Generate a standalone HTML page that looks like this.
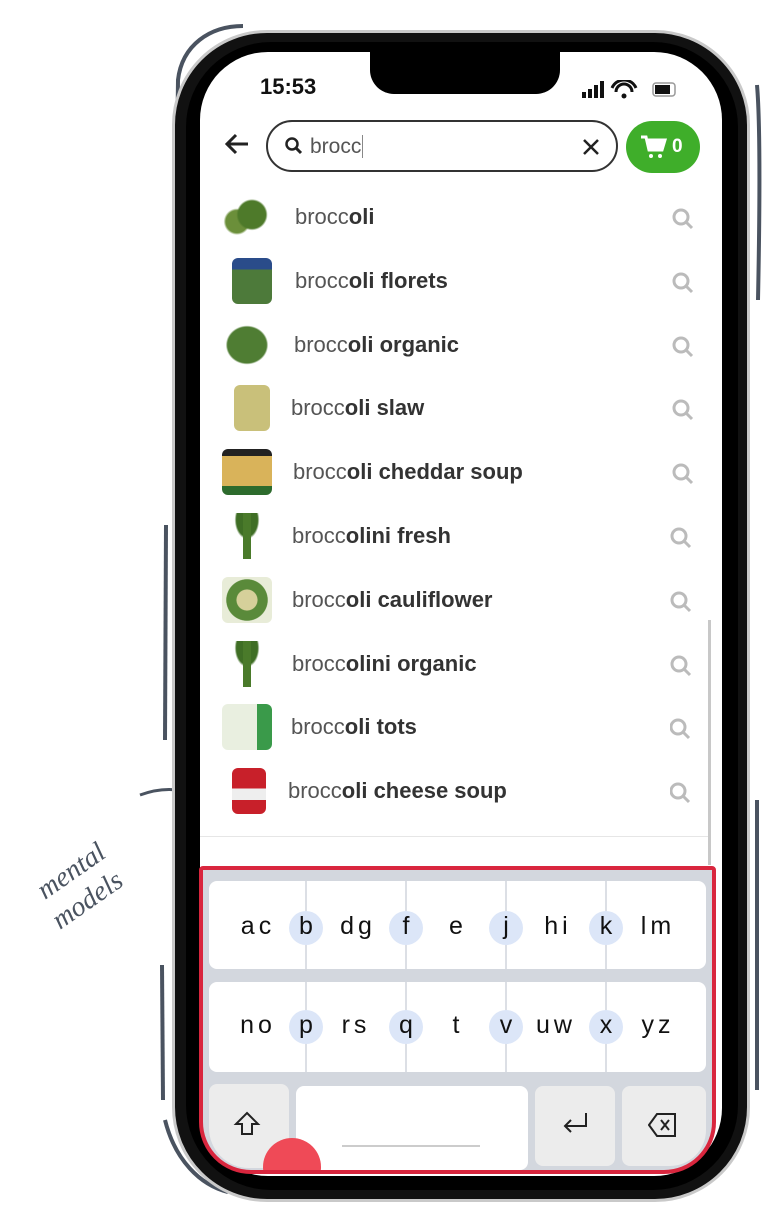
<!DOCTYPE html>
<html><head><meta charset="utf-8"><style>
*{margin:0;padding:0;box-sizing:border-box}
body{width:780px;height:1222px;background:#fff;position:relative;overflow:hidden;font-family:"Liberation Sans",sans-serif}
.abs{position:absolute}
.row{position:absolute;left:222px;width:480px;height:50px;display:flex;align-items:center}
.thumb{width:50px;height:46px;border-radius:6px;margin-right:18px}
.row .t{font-size:22px;color:#555;flex:1}
.row .t b{color:#333}
.key{position:absolute;background:#fff;border-radius:8px}
.lt{position:absolute;font-size:25px;color:#111;transform:translateX(-50%);letter-spacing:4px}
.hl{position:absolute;width:34px;height:34px;border-radius:50%;background:#dce6f8;transform:translate(-50%,-50%)}
.div{position:absolute;width:2px;background:#dcdfe5}
</style></head><body>
<svg class="abs" style="left:0;top:0" width="780" height="1222">
<path d="M243 26 C210 26 182 45 178 80 L176 240" stroke="#4a5360" stroke-width="4" fill="none"/>
<path d="M757 85 C760 120 760 200 758 300" stroke="#4a5360" stroke-width="4" fill="none"/>
<path d="M757 800 L757 1090" stroke="#4a5360" stroke-width="4" fill="none"/>
<path d="M166 525 L165 740" stroke="#4a5360" stroke-width="4" fill="none"/>
<path d="M162 965 L163 1100" stroke="#4a5360" stroke-width="4" fill="none"/>
<path d="M165 1120 C175 1160 200 1185 228 1192" stroke="#4a5360" stroke-width="4" fill="none"/>
<path d="M140 795 C180 780 220 795 232 845 M222 832 L232 847 L240 832" stroke="#4a5360" stroke-width="3" fill="none"/>
<text x="0" y="0" transform="translate(45 900) rotate(-35)" font-family="Liberation Serif" font-style="italic" font-size="28" fill="#4a5360">mental</text>
<text x="0" y="0" transform="translate(60 930) rotate(-35)" font-family="Liberation Serif" font-style="italic" font-size="28" fill="#4a5360">models</text>
</svg>
<div class="abs" style="left:172px;top:30px;width:578px;height:1172px;border-radius:95px;border:3px solid #c9c9c9;background:#111"></div>
<div class="abs" style="left:186px;top:42px;width:552px;height:1148px;border-radius:85px;background:#000"></div>
<div class="abs" style="left:200px;top:52px;width:522px;height:1124px;border-radius:68px;background:#fff;overflow:hidden">
  <div class="abs" style="left:170px;top:-4px;width:190px;height:46px;background:#000;border-radius:0 0 24px 24px"></div>
</div>
<div class="abs" style="left:260px;top:74px;font-size:22px;font-weight:bold;color:#111">15:53</div>
<svg class="abs" style="left:582px;top:80px" width="100" height="20">
<rect x="0" y="12" width="4" height="6" fill="#111"/><rect x="6" y="9" width="4" height="9" fill="#111"/><rect x="12" y="5" width="4" height="13" fill="#111"/><rect x="18" y="1" width="4" height="17" fill="#111"/>
<path d="M30 8 A13 13 0 0 1 54 8 M34 12 A8 8 0 0 1 50 12" stroke="#111" stroke-width="3" fill="none"/><circle cx="42" cy="16" r="2.5" fill="#111"/>
<rect x="71" y="3" width="22" height="13" rx="3" fill="none" stroke="#999" stroke-width="1.5"/><rect x="73" y="5" width="15" height="9" fill="#111"/>
</svg>
<svg class="abs" style="left:224px;top:132px" width="28" height="24"><path d="M24 12 H4 M12 3 L3 12 L12 21" stroke="#222" stroke-width="3" fill="none"/></svg>
<div class="abs" style="left:266px;top:120px;width:352px;height:52px;border:2px solid #333;border-radius:26px"></div>
<svg class="abs" style="left:284px;top:136px" width="20" height="20"><circle cx="8" cy="8" r="5.5" stroke="#222" stroke-width="2.5" fill="none"/><path d="M12 12 L17 17" stroke="#222" stroke-width="3"/></svg>
<div class="abs" style="left:310px;top:135px;font-size:21px;color:#555">brocc<span style="border-left:1px solid #888;margin-left:1px"></span></div>
<svg class="abs" style="left:581px;top:137px" width="20" height="20"><path d="M3 3 L17 17 M17 3 L3 17" stroke="#222" stroke-width="2.5"/></svg>
<div class="abs" style="left:626px;top:121px;width:74px;height:52px;border-radius:26px;background:#3fae2a"></div>
<svg class="abs" style="left:640px;top:134px" width="28" height="26"><path d="M1 3 H6 L9 16 H22 L25 6 H8" stroke="#fff" stroke-width="3" fill="#fff"/><circle cx="11" cy="22" r="2" fill="#fff"/><circle cx="20" cy="22" r="2" fill="#fff"/></svg>
<div class="abs" style="left:672px;top:136px;font-size:19px;color:#fff;font-weight:bold">0</div>
<div class="row" style="top:192px"><div class="thumb" style="background:radial-gradient(circle at 60% 45%,#4e7a2a 0 35%,transparent 40%),radial-gradient(circle at 30% 60%,#6b8f3a 0 25%,transparent 30%)"></div><div class="t" style="margin-left:5px">brocc<b>oli</b></div></div>
<div class="row" style="top:256px"><div class="thumb" style="width:40px;margin-left:10px;background:linear-gradient(#2a4c8a 0 25%,#4d7a3a 25%)"></div><div class="t" style="margin-left:5px">brocc<b>oli florets</b></div></div>
<div class="row" style="top:320px"><div class="thumb" style="background:radial-gradient(ellipse at 50% 50%,#4f7d33 0 55%,transparent 60%)"></div><div class="t" style="margin-left:4px">brocc<b>oli organic</b></div></div>
<div class="row" style="top:383px"><div class="thumb" style="width:36px;margin-left:12px;background:#c9c07a"></div><div class="t" style="margin-left:3px">brocc<b>oli slaw</b></div></div>
<div class="row" style="top:447px"><div class="thumb" style="background:linear-gradient(#222 0 15%,#d9b35a 15% 80%,#2d6b2d 80%)"></div><div class="t" style="margin-left:3px">brocc<b>oli cheddar soup</b></div></div>
<div class="row" style="top:511px"><div class="thumb" style="background:linear-gradient(90deg,transparent 42%,#4a7a2a 42% 58%,transparent 58%),radial-gradient(ellipse at 50% 15%,#3f6e25 0 30%,transparent 35%)"></div><div class="t" style="margin-left:2px">brocc<b>olini fresh</b></div></div>
<div class="row" style="top:575px"><div class="thumb" style="background:radial-gradient(circle,#d6d09a 0 30%,#5a8a3a 32% 60%,#e8ecd8 62%)"></div><div class="t" style="margin-left:2px">brocc<b>oli cauliflower</b></div></div>
<div class="row" style="top:639px"><div class="thumb" style="background:linear-gradient(90deg,transparent 42%,#4a7a2a 42% 58%,transparent 58%),radial-gradient(ellipse at 50% 15%,#3f6e25 0 30%,transparent 35%)"></div><div class="t" style="margin-left:2px">brocc<b>olini organic</b></div></div>
<div class="row" style="top:702px"><div class="thumb" style="background:linear-gradient(90deg,#e9efe0 0 70%,#3a9a4a 70%)"></div><div class="t" style="margin-left:1px">brocc<b>oli tots</b></div></div>
<div class="row" style="top:766px"><div class="thumb" style="width:34px;margin-left:10px;background:linear-gradient(#c8202a 0 45%,#eee 45% 70%,#c8202a 70%)"></div><div class="t" style="margin-left:4px">brocc<b>oli cheese soup</b></div></div>
<svg class="abs" style="left:670px;top:205px" width="28" height="620">
<g stroke="#bbb" stroke-width="3" fill="none">
<circle cx="11" cy="12" r="7"/><path d="M16 17 L22 23"/>
<circle cx="11" cy="76" r="7"/><path d="M16 81 L22 87"/>
<circle cx="11" cy="140" r="7"/><path d="M16 145 L22 151"/>
<circle cx="11" cy="203" r="7"/><path d="M16 208 L22 214"/>
<circle cx="11" cy="267" r="7"/><path d="M16 272 L22 278"/>
<circle cx="9" cy="331" r="7"/><path d="M14 336 L20 342"/>
<circle cx="9" cy="395" r="7"/><path d="M14 400 L20 406"/>
<circle cx="9" cy="459" r="7"/><path d="M14 464 L20 470"/>
<circle cx="8" cy="522" r="7"/><path d="M13 527 L19 533"/>
<circle cx="8" cy="586" r="7"/><path d="M13 591 L19 597"/>
</g></svg>
<div class="abs" style="left:708px;top:620px;width:3px;height:245px;background:#c8c8c8"></div>
<div class="abs" style="left:200px;top:836px;width:508px;height:1px;background:#e6e6e6"></div>
<div class="abs" style="left:199px;top:866px;width:517px;height:308px;border:4px solid #d9263e;border-radius:4px 4px 52px 52px;background:#d3d7de"></div>
<div class="key" style="left:209px;top:881px;width:497px;height:88px"></div>
<div class="key" style="left:209px;top:982px;width:497px;height:90px"></div>
<div class="key" style="left:209px;top:1084px;width:80px;height:84px;background:#ececec;border-radius:8px 8px 8px 40px"></div>
<div class="key" style="left:296px;top:1086px;width:232px;height:84px"></div>
<div class="abs" style="left:342px;top:1145px;width:138px;height:2px;background:#ccc"></div>
<div class="key" style="left:535px;top:1086px;width:80px;height:80px;background:#ececec"></div>
<div class="key" style="left:622px;top:1086px;width:84px;height:80px;background:#ececec;border-radius:8px 8px 36px 8px"></div>
<div class="abs" style="left:262px;top:1138px;width:60px;height:32px;overflow:hidden"><div style="position:absolute;left:1px;top:0;width:58px;height:58px;border-radius:50%;background:#ef4a57"></div></div>
<div class="div" style="left:305px;top:881px;height:88px"></div><div class="div" style="left:405px;top:881px;height:88px"></div><div class="div" style="left:505px;top:881px;height:88px"></div><div class="div" style="left:605px;top:881px;height:88px"></div>
<div class="div" style="left:305px;top:982px;height:90px"></div><div class="div" style="left:405px;top:982px;height:90px"></div><div class="div" style="left:505px;top:982px;height:90px"></div><div class="div" style="left:605px;top:982px;height:90px"></div>
<div class="hl" style="left:306px;top:928px"></div><div class="hl" style="left:406px;top:928px"></div><div class="hl" style="left:506px;top:928px"></div><div class="hl" style="left:606px;top:928px"></div>
<div class="hl" style="left:306px;top:1027px"></div><div class="hl" style="left:406px;top:1027px"></div><div class="hl" style="left:506px;top:1027px"></div><div class="hl" style="left:606px;top:1027px"></div>
<div class="lt" style="left:258px;top:912px">ac</div><div class="lt" style="left:306px;top:912px;letter-spacing:0">b</div><div class="lt" style="left:358px;top:912px">dg</div><div class="lt" style="left:406px;top:912px;letter-spacing:0">f</div><div class="lt" style="left:456px;top:912px;letter-spacing:0">e</div><div class="lt" style="left:506px;top:912px;letter-spacing:0">j</div><div class="lt" style="left:558px;top:912px">hi</div><div class="lt" style="left:606px;top:912px;letter-spacing:0">k</div><div class="lt" style="left:658px;top:912px">lm</div>
<div class="lt" style="left:258px;top:1011px">no</div><div class="lt" style="left:306px;top:1011px;letter-spacing:0">p</div><div class="lt" style="left:356px;top:1011px">rs</div><div class="lt" style="left:406px;top:1011px;letter-spacing:0">q</div><div class="lt" style="left:456px;top:1011px;letter-spacing:0">t</div><div class="lt" style="left:506px;top:1011px;letter-spacing:0">v</div><div class="lt" style="left:556px;top:1011px">uw</div><div class="lt" style="left:606px;top:1011px;letter-spacing:0">x</div><div class="lt" style="left:658px;top:1011px">yz</div>
<svg class="abs" style="left:233px;top:1110px" width="28" height="28"><path d="M14 3 L25 14 H19 V24 H9 V14 H3 Z" stroke="#222" stroke-width="2" fill="none"/></svg>
<svg class="abs" style="left:560px;top:1110px" width="30" height="28"><path d="M26 3 V16 H5 M11 10 L5 16 L11 22" stroke="#222" stroke-width="2" fill="none"/></svg>
<svg class="abs" style="left:648px;top:1112px" width="30" height="26"><path d="M9 2 H27 V24 H9 L1 13 Z" stroke="#222" stroke-width="2" fill="none"/><path d="M13 8 L21 18 M21 8 L13 18" stroke="#222" stroke-width="2"/></svg>
</body></html>
